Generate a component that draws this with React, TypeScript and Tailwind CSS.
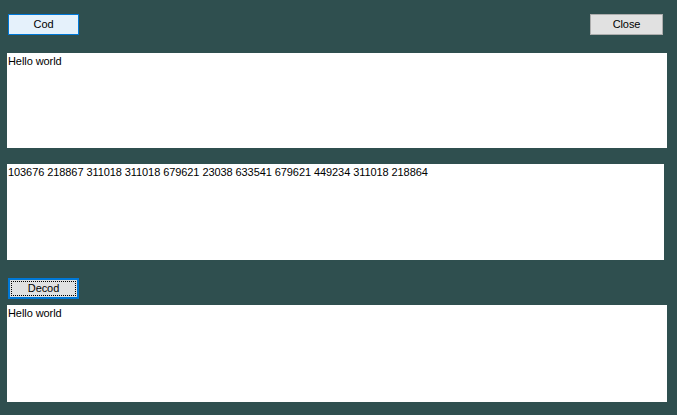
export default function App() {
    return (
        <div className="w-[677px] h-[415px] bg-[#2f4f4f] flex flex-col font-['Liberation_Sans',Arial,sans-serif] text-[11px] leading-[13px] tracking-[-0.08px] text-black overflow-hidden">

            {/* top buttons */}
            <div className="flex items-start pt-[14px] pl-[8px] pr-[14px]">
                <button className="w-[71px] h-[21px] border border-[#0078d7] bg-[#e5f1fb] flex items-center justify-center">
                    Cod
                </button>
                <button className="ml-auto w-[73px] h-[21px] border border-[#adadad] bg-[#e1e1e1] flex items-center justify-center">
                    Close
                </button>
            </div>

            {/* source text */}
            <div className="mt-[18px] ml-[7px] w-[660px] h-[95px] bg-white pl-[1px] pt-[2px]">
                Hello world
            </div>

            {/* encoded text */}
            <div className="mt-[16px] ml-[7px] w-[657px] h-[96px] bg-white pl-[1px] pt-[2px]">
                103676 218867 311018 311018 679621 23038 633541 679621 449234 311018 218864
            </div>

            {/* decode button */}
            <div className="mt-[18px] ml-[8px]">
                <button className="w-[71px] h-[21px] border-2 border-[#0078d7] bg-[#e1e1e1] p-[1px] flex">
                    <span className="flex-1 border border-dotted border-black flex items-center justify-center">
                        Decod
                    </span>
                </button>
            </div>

            {/* decoded text */}
            <div className="mt-[6px] ml-[7px] w-[660px] h-[97px] bg-white pl-[1px] pt-[2px]">
                Hello world
            </div>
        </div>
    );
}
